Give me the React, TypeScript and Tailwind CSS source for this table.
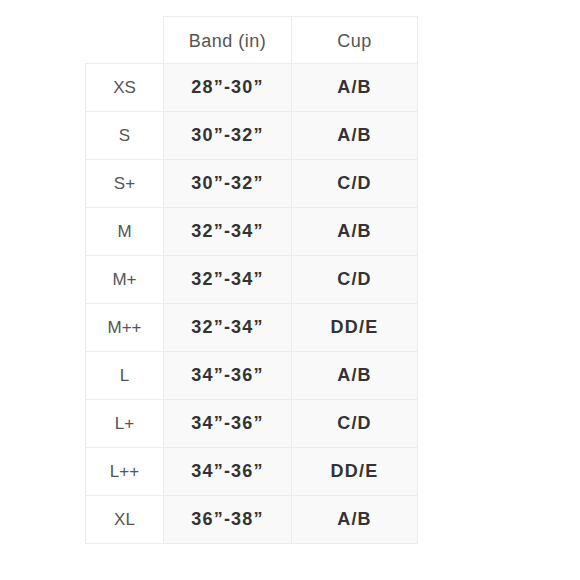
const rows: [string, string, string][] = [
  ["XS", "28”-30”", "A/B"],
  ["S", "30”-32”", "A/B"],
  ["S+", "30”-32”", "C/D"],
  ["M", "32”-34”", "A/B"],
  ["M+", "32”-34”", "C/D"],
  ["M++", "32”-34”", "DD/E"],
  ["L", "34”-36”", "A/B"],
  ["L+", "34”-36”", "C/D"],
  ["L++", "34”-36”", "DD/E"],
  ["XL", "36”-38”", "A/B"],
];

export default function App() {
  return (
    <div className="w-[580px] h-[580px] bg-white pt-[16px] pl-[85px] font-['Liberation_Sans',Arial,sans-serif]">
      <table className="border-collapse">
        <thead>
          <tr className="h-[47px]">
            <th className="w-[78px] p-0" />
            <th className="w-[128px] p-0 pt-[2px] border border-[#ececec] font-normal text-[18px] tracking-[0.5px] text-[#555]">
              Band (in)
            </th>
            <th className="w-[126px] p-0 pt-[2px] border border-[#ececec] font-normal text-[18px] tracking-[0.5px] text-[#555]">
              Cup
            </th>
          </tr>
        </thead>
        <tbody>
          {rows.map(([size, band, cup]) => (
            <tr key={size} className="h-[48px]">
              <td className="p-0 border border-[#ececec] text-center text-[17px] text-[#555]">
                {size}
              </td>
              <td className="p-0 border border-[#ececec] bg-[#f9f9f9] text-center font-bold text-[18px] tracking-[1.2px] text-[#333]">
                {band}
              </td>
              <td className="p-0 border border-[#ececec] bg-[#f9f9f9] text-center font-bold text-[18px] tracking-[1.2px] text-[#333]">
                {cup}
              </td>
            </tr>
          ))}
        </tbody>
      </table>
    </div>
  );
}
